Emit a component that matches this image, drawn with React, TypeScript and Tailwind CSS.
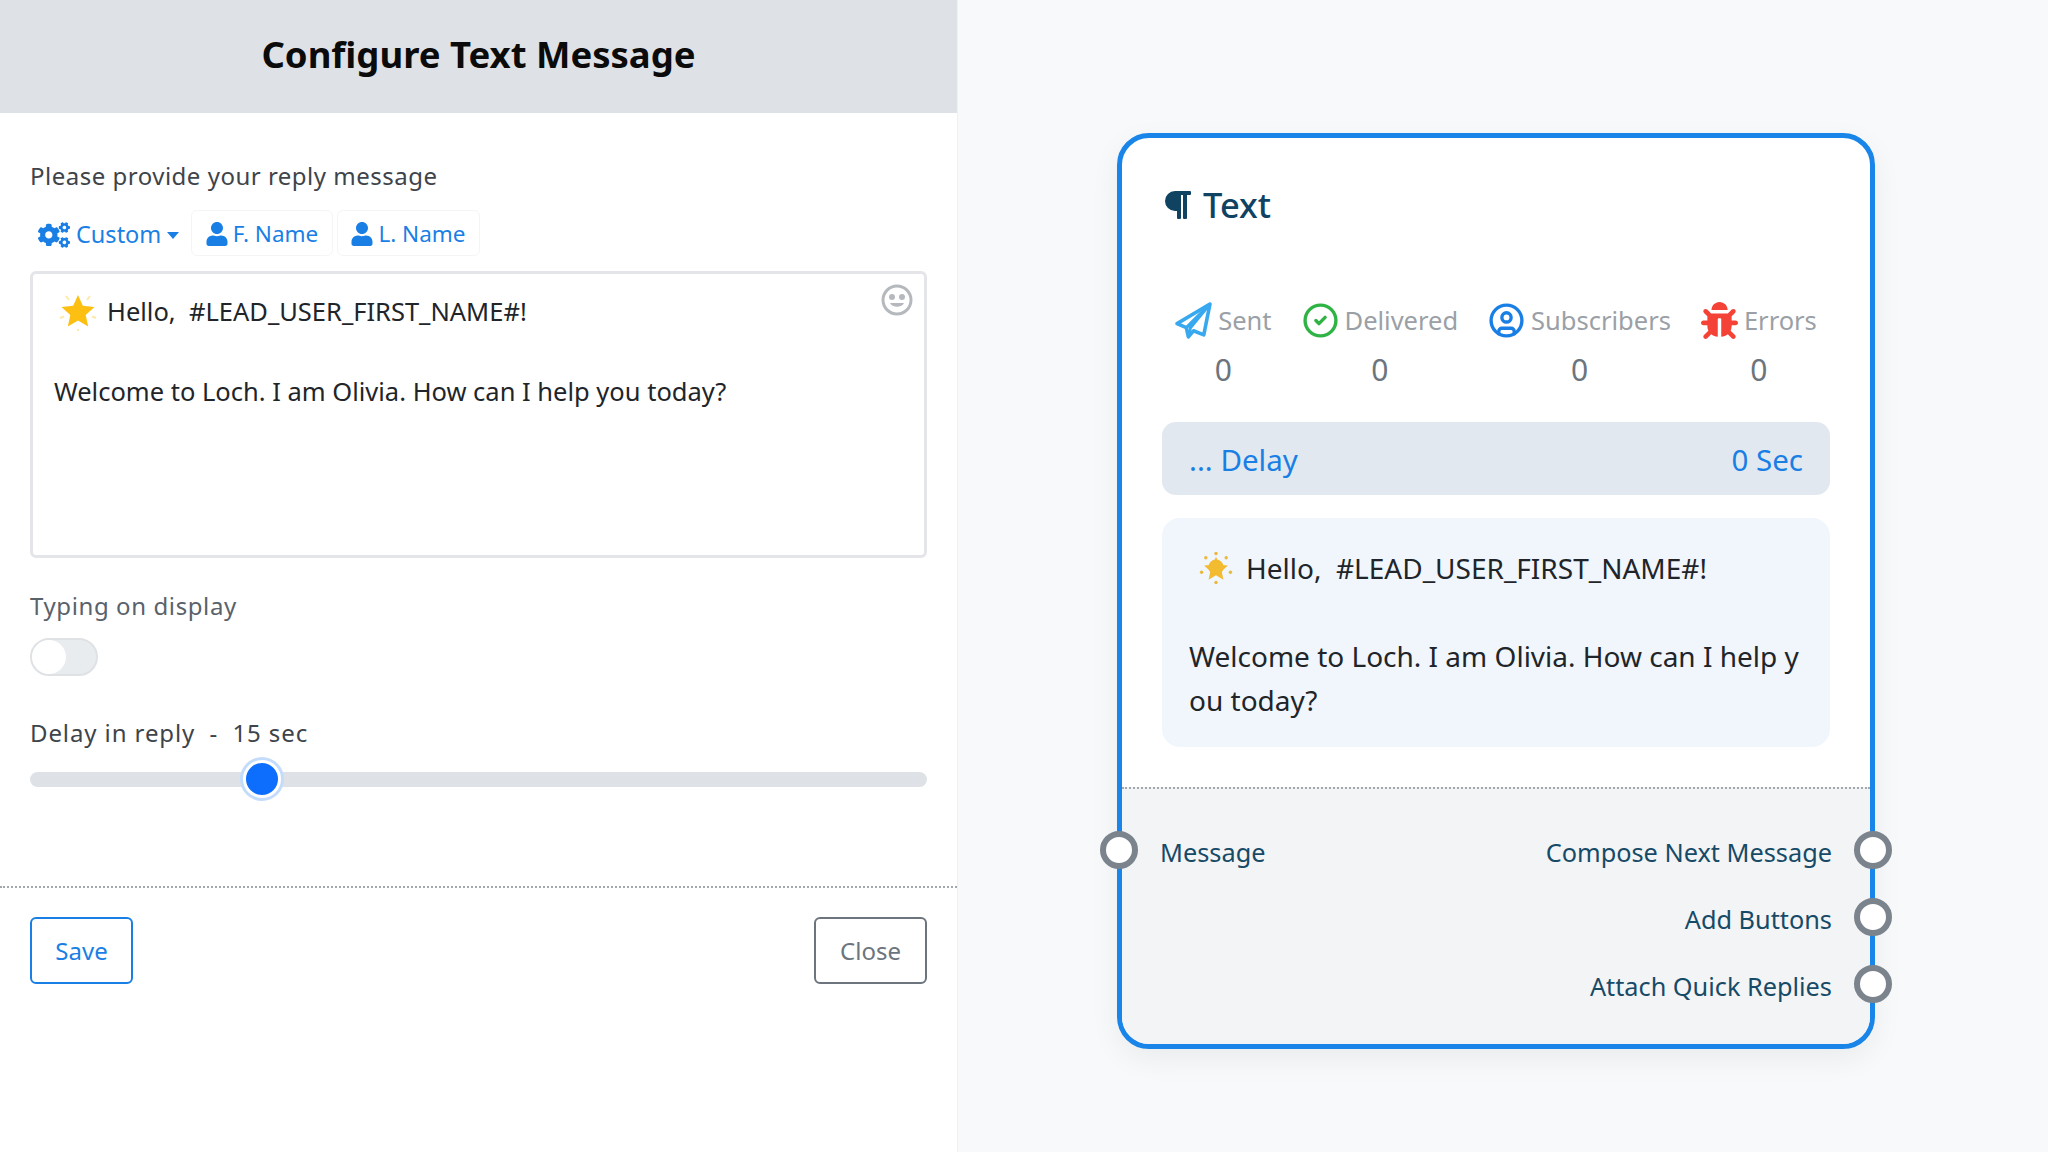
import { CircleCheck, CircleUser } from "lucide-react";
import { FaBug, FaCogs, FaParagraph, FaUser } from "react-icons/fa";

const starPath = "M20 3l5.200 11.500 12.300 1.300-9.200 8.300 2.600 12.400L20 30.200 9.100 36.500l2.600-12.400-9.200-8.300 12.300-1.300z";

function RaysStar() {
  return (
    <svg viewBox="0 0 40 40" className="ml-[4px] h-[40px] w-[40px]">
      <path
        d="M8 5l3 4M32 5l-3 4M2 27l4-1.500M38 27l-4-1.500M20 38v2"
        stroke="#fdeaa8"
        strokeWidth="2"
      />
      <path fill="#fcbf12" d="M20 4l4.800 10.800 11.700 1.200-8.800 7.900 2.500 11.700L20 29.600 9.800 35.600l2.500-11.700L3.500 16l11.700-1.200z" />
    </svg>
  );
}

function SunStar() {
  return (
    <svg viewBox="0 0 40 40" className="ml-[10px] h-[34px] w-[34px]">
      <circle cx="8" cy="8" r="2" fill="#eab93c" />
      <circle cx="32" cy="8" r="2" fill="#eab93c" />
      <circle cx="3" cy="25" r="2" fill="#eab93c" />
      <circle cx="37" cy="25" r="2" fill="#eab93c" />
      <circle cx="20" cy="37" r="2" fill="#eab93c" />
      <circle cx="20" cy="3" r="2" fill="#eab93c" />
      <path fill="#f2bb30" d={starPath} transform="translate(4 4.500) scale(0.8)" />
      <circle cx="20" cy="19" r="9" fill="#f2bb30" />
    </svg>
  );
}

function SentIcon() {
  return (
    <svg viewBox="0 0 36 36" className="h-[37px] w-[37px]" fill="none" stroke="#38a8ef" strokeWidth="3.500" strokeLinejoin="round">
      <path d="M34 2L2 21l9 4 2 9 5-6 10 4z" />
      <path d="M34 2L11 25M13 34l2-9L34 2" strokeWidth="3" />
    </svg>
  );
}

function Stat({ icon, label }: { icon: React.ReactNode; label: string }) {
  return (
    <div className="flex flex-col items-center">
      <div className="flex h-[40px] items-center gap-[6px] text-[25.500px] text-[#9aa0a6]">
        {icon}
        <span>{label}</span>
      </div>
      <div className="mt-[10px] text-[30px] leading-[40px] text-[#6c757d]">0</div>
    </div>
  );
}

function Port({ side, top }: { side: "left" | "right"; top: string }) {
  return (
    <span
      className={`absolute h-[38px] w-[38px] rounded-full border-[6px] border-[#7b838d] bg-white ${top} ${
        side === "left" ? "left-[-22px]" : "right-[-22px]"
      }`}
    />
  );
}

export default function App() {
  return (
    <div className="flex h-[1152px] w-[2048px] overflow-hidden bg-[#f8f9fa] font-['Noto_Sans',sans-serif]">
      <div className="flex w-[958px] flex-col border-r border-[#eef0f2] bg-white">
        <div className="flex h-[113px] items-center justify-center bg-[#dee2e6] pb-[5px] text-[36.500px] font-bold text-[#0b0b0b]">
          Configure Text Message
        </div>
        <div className="px-[30px] pt-[46px]">
          <div className="text-[24px] leading-[34px] tracking-[0.5px] text-[#3e444a]">Please provide your reply message</div>
          <div className="mt-[17px] flex h-[46px] items-center text-[22.500px] text-[#1a7fe5]">
            <button className="flex w-[161px] items-center pl-[8px] pt-[4px] text-[23.500px]">
              <FaCogs className="h-[26px] w-[32px]" />
              <span className="ml-[6px]">Custom</span>
              <span className="ml-[6px] border-x-[6px] border-t-[7px] border-x-transparent border-t-[#1a7fe5]" />
            </button>
            <button className="flex h-[46px] w-[142px] items-center justify-center gap-[5px] rounded-[6px] border border-[#f4f5f6] pt-[1px]">
              <FaUser className="h-[24px] w-[22px]" />
              F. Name
            </button>
            <button className="ml-[4px] flex h-[46px] w-[143px] items-center justify-center gap-[5px] rounded-[6px] border border-[#f4f5f6] pt-[1px]">
              <FaUser className="h-[24px] w-[22px]" />
              L. Name
            </button>
          </div>
          <div className="relative mt-[15px] h-[287px] rounded-[6px] border-[3px] border-[#e3e5e8] px-[21px] pt-[17px] text-[25.500px] text-[#212529]">
            <div className="flex h-[40px] items-center">
              <RaysStar />
              <span className="ml-[9px]">Hello,&nbsp; #LEAD_USER_FIRST_NAME#!</span>
            </div>
            <div className="mt-[40px] leading-[40px]">Welcome to Loch. I am Olivia. How can I help you today?</div>
            <svg viewBox="0 0 32 32" className="absolute right-[11px] top-[10px] h-[32px] w-[32px]" fill="none" stroke="#b5b9bd" strokeWidth="3">
              <circle cx="16" cy="16" r="14" />
              <circle cx="11" cy="13" r="1.500" fill="#b5b9bd" />
              <circle cx="21" cy="13" r="1.500" fill="#b5b9bd" />
              <path d="M9 19c2 5 12 5 14 0z" fill="#b5b9bd" stroke="none" />
            </svg>
          </div>
          <div className="mt-[31px] text-[24px] leading-[34px] tracking-[0.6px] text-[#59626a]">Typing on display</div>
          <div className="mt-[15px] h-[38px] w-[68px] rounded-full border-[2px] border-[#dfe2e5] bg-[#e9ecef]">
            <div className="h-[34px] w-[34px] rounded-full bg-white" />
          </div>
          <div className="mt-[40px] text-[24px] leading-[34px] tracking-[0.9px] text-[#3e444a]">Delay in reply&nbsp; -&nbsp; 15 sec</div>
          <div className="relative mt-[22px] h-[15px] rounded-full bg-[#dee2e6]">
            <span className="absolute left-[213px] top-[-12px] h-[38px] w-[38px] rounded-full border-[3px] border-white bg-[#0d6efd] shadow-[0_0_0_3px_#c4dcfb]" />
          </div>
        </div>
        <div className="mt-[99px] border-t-[2px] border-dotted border-[#a3a8ad]" />
        <div className="flex justify-between px-[30px] pt-[29px] text-[24px]">
          <button className="h-[67px] w-[103px] rounded-[6px] border-[2px] border-[#1a7fe5] text-[#1a7fe5]">Save</button>
          <button className="h-[67px] w-[113px] rounded-[6px] border-[2px] border-[#6c757d] text-[#6c757d]">Close</button>
        </div>
      </div>

      <div className="pl-[159px] pt-[133px]">
        <div className="relative flex h-[916px] w-[758px] flex-col rounded-[32px] border-[5px] border-[#1a85e8] bg-white shadow-[0_10px_30px_rgba(0,0,0,0.06)]">
          <div className="flex-1 px-[40px]">
            <div className="mt-[45px] flex items-center gap-[11px] text-[34.500px] font-medium leading-[44px] text-[#0f4361]">
              <FaParagraph className="h-[32px] w-[30px]" />
              Text
            </div>
            <div className="mt-[73px] flex justify-center gap-[30px]">
              <Stat label="Sent" icon={<SentIcon />} />
              <Stat label="Delivered" icon={<CircleCheck className="h-[37px] w-[37px] text-[#2fb344]" strokeWidth={2.2} />} />
              <Stat label="Subscribers" icon={<CircleUser className="h-[37px] w-[37px] text-[#1a7fe5]" strokeWidth={2.2} />} />
              <Stat label="Errors" icon={<FaBug className="h-[37px] w-[37px] text-[#f44336]" />} />
            </div>
            <div className="mt-[32px] flex h-[73px] items-center justify-between rounded-[14px] bg-[#e2e8f0] px-[27px] pt-[3px] text-[29.500px] text-[#1a7fe5]">
              <span>... Delay</span>
              <span>0 Sec</span>
            </div>
            <div className="mt-[23px] h-[229px] rounded-[18px] bg-[#f0f6fc] px-[27px] pt-[28px] text-[28px] leading-[44px] text-[#212529]">
              <div className="flex items-center">
                <SunStar />
                <span className="ml-[13px]">Hello,&nbsp; #LEAD_USER_FIRST_NAME#!</span>
              </div>
              <div className="mt-[44px] break-all">Welcome to Loch. I am Olivia. How can I help you today?</div>
            </div>
          </div>
          <div className="h-[257px] rounded-b-[27px] border-t-[2px] border-dotted border-[#a3a8ad] bg-[#f3f4f6] px-[38px] pt-[41px] text-[25.300px] leading-[44px] text-[#164a66]">
            <div className="flex justify-between">
              <span>Message</span>
              <span>Compose Next Message</span>
            </div>
            <div className="mt-[23px] text-right">Add Buttons</div>
            <div className="mt-[23px] text-right">Attach Quick Replies</div>
          </div>
          <Port side="left" top="top-[693px]" />
          <Port side="right" top="top-[693px]" />
          <Port side="right" top="top-[760px]" />
          <Port side="right" top="top-[827px]" />
        </div>
      </div>
    </div>
  );
}
